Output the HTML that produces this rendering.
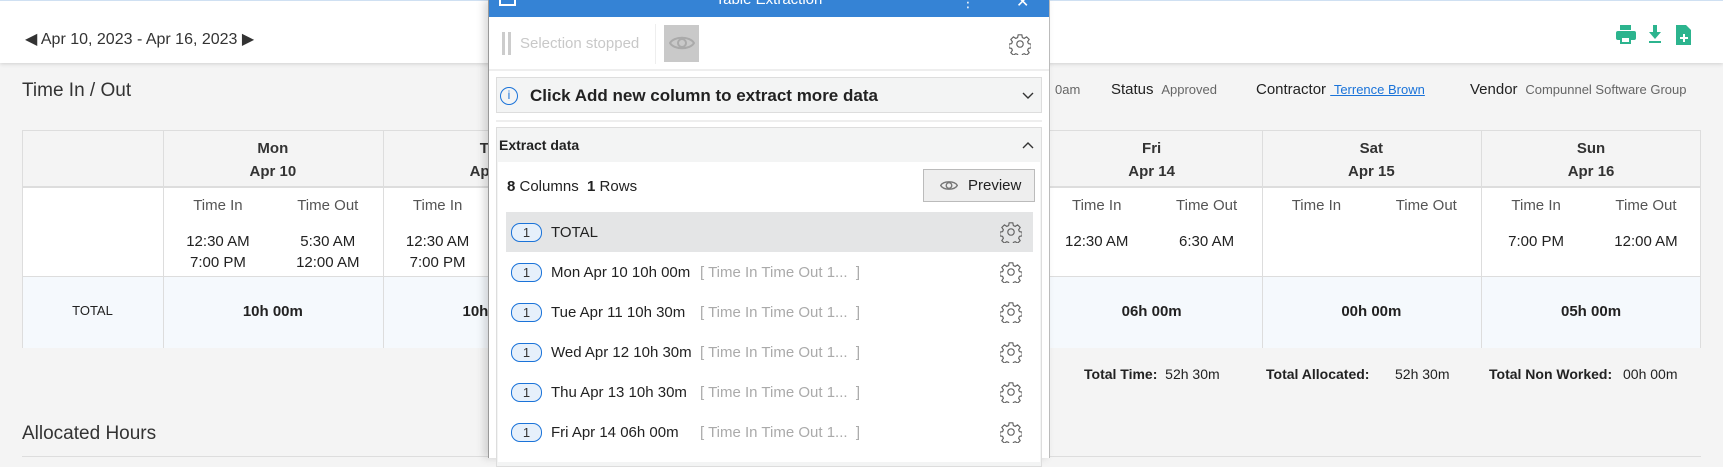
<!DOCTYPE html>
<html><head><meta charset="utf-8"><style>
*{box-sizing:border-box;margin:0;padding:0}
body{width:1723px;height:458px;overflow:hidden;background:#f4f4f4;font-family:"Liberation Sans",Arial,sans-serif;color:#333;position:relative}
.a{position:absolute;white-space:nowrap}
.c{text-align:center}
</style></head><body>
<div class="a" style="left:0;top:0;width:1723px;height:63px;background:#fff;box-shadow:0 1px 4px rgba(0,0,0,.15)"></div>
<div class="a" style="left:0;top:0;width:1723px;height:1px;background:#cfe0f2"></div>
<div class="a" style="left:25px;top:29px;font-size:16px;color:#333">◀ Apr 10, 2023 - Apr 16, 2023 ▶</div>
<svg class="a" style="left:1615px;top:24px" width="80" height="22" viewBox="0 0 80 22">
<g fill="#2cb48e">
<rect x="5" y="1" width="11" height="5"/><rect x="1" y="7" width="20" height="9" rx="2"/><rect x="5" y="12" width="11" height="8"/><rect x="7" y="14" width="7" height="4" fill="#fff"/>
<rect x="38" y="1" width="4" height="8"/><path d="M34 8h12l-6 7z"/><rect x="34" y="17" width="12" height="2"/>
<path d="M61 1h10l5 5v15h-15z"/><path d="M68 10h2v3h3v2h-3v3h-2v-3h-3v-2h3z" fill="#fff"/>
</g></svg>
<div class="a" style="left:22px;top:80px;font-size:19px;color:#333">Time In / Out</div>
<div class="a" style="left:1055px;top:82px;font-size:13px;color:#666">0am</div>
<div class="a" style="left:1111px;top:81px;font-size:15px;color:#222">Status <span style="font-size:13px;color:#666">&nbsp;Approved</span></div>
<div class="a" style="left:1256px;top:81px;font-size:15px;color:#222">Contractor <span style="font-size:13px;color:#1a73d9;text-decoration:underline">&nbsp;Terrence Brown</span></div>
<div class="a" style="left:1470px;top:81px;font-size:15px;color:#222">Vendor <span style="font-size:13px;color:#666">&nbsp;Compunnel Software Group</span></div>

<div class="a" style="left:22px;top:130px;width:1679px;height:218px;border:1px solid #ddd;border-bottom:none;background:#fff"></div>
<div class="a" style="left:23px;top:131px;width:1677px;height:57px;background:#f4f4f4;border-bottom:2px solid #ddd"></div>
<div class="a" style="left:23px;top:276px;width:1677px;height:72px;background:#f5f9fd;border-top:1px solid #ddd"></div>
<div class="a c" style="left:22px;top:303px;width:141px;font-size:13px;color:#222">TOTAL</div>
<div id="cols"></div>
<script>
var d=[["Mon","Apr 10",["12:30 AM","7:00 PM"],["5:30 AM","12:00 AM"],"10h 00m"],["Tue","Apr 11",["12:30 AM","7:00 PM"],["",""],"10h 30m"],["Wed","Apr 12",[],[],"10h 30m"],["Thu","Apr 13",[],[],"10h 30m"],["Fri","Apr 14",["12:30 AM"],["6:30 AM"],"06h 00m"],["Sat","Apr 15",[],[],"00h 00m"],["Sun","Apr 16",["7:00 PM"],["12:00 AM"],"05h 00m"]];
var h="";
for(var i=0;i<7;i++){var x=163+i*219.7,w=219.7,e=d[i];
h+='<div class="a" style="left:'+x+'px;top:131px;width:1px;height:217px;background:#ddd"></div>';
h+='<div class="a c" style="left:'+x+'px;top:137px;width:'+w+'px;font-size:15px;font-weight:bold;line-height:23px">'+e[0]+'<br>'+e[1]+'</div>';
h+='<div class="a c" style="left:'+x+'px;top:197px;width:'+w/2+'px;font-size:15px;color:#555">Time In</div>';
h+='<div class="a c" style="left:'+(x+w/2)+'px;top:197px;width:'+w/2+'px;font-size:15px;color:#555">Time Out</div>';
h+='<div class="a c" style="left:'+x+'px;top:231px;width:'+w/2+'px;font-size:15px;line-height:21px;color:#222">'+e[2].join('<br>')+'</div>';
h+='<div class="a c" style="left:'+(x+w/2)+'px;top:231px;width:'+w/2+'px;font-size:15px;line-height:21px;color:#222">'+e[3].join('<br>')+'</div>';
h+='<div class="a c" style="left:'+x+'px;top:303px;width:'+w+'px;font-size:15px;font-weight:bold;color:#222">'+e[4]+'</div>';}
document.getElementById('cols').innerHTML=h;
</script>
<div class="a" style="left:1084px;top:366px;font-size:14px;color:#222"><b>Total Time:</b>&nbsp; 52h 30m</div>
<div class="a" style="left:1266px;top:366px;font-size:14px;color:#222"><b>Total Allocated:</b></div>
<div class="a" style="left:1395px;top:366px;font-size:14px;color:#222">52h 30m</div>
<div class="a" style="left:1489px;top:366px;font-size:14px;color:#222"><b>Total Non Worked:</b></div>
<div class="a" style="left:1623px;top:366px;font-size:14px;color:#222">00h 00m</div>
<div class="a" style="left:22px;top:423px;font-size:19px;color:#333">Allocated Hours</div>
<div class="a" style="left:22px;top:456px;width:1679px;height:1px;background:#ddd"></div>

<div class="a" style="left:488px;top:0;width:562px;height:458px;background:#fff;border-left:1px solid #999;border-right:1px solid #bbb;box-shadow:-4px 0 8px rgba(0,0,0,.15);font-family:'Liberation Sans','DejaVu Sans',sans-serif">
 <div class="a" style="left:0;top:0;width:560px;height:17px;background:#3583d5;overflow:hidden">
  <div class="a" style="left:10px;top:-8px;width:17px;height:14px;border:2px solid #fff"></div>
  <div class="a c" style="left:0;top:-9px;width:560px;color:#fff;font-size:15px">Table Extraction</div>
  <div class="a" style="left:472px;top:-6px;color:#fff;font-size:14px">⋮</div>
  <div class="a" style="left:527px;top:-8px;color:#fff;font-size:16px">✕</div>
 </div>
 <div class="a" style="left:13px;top:32px;width:3px;height:23px;background:#ccc"></div>
 <div class="a" style="left:19px;top:32px;width:3px;height:23px;background:#ccc"></div>
 <div class="a" style="left:31px;top:35px;font-size:15px;color:#c8c8c8">Selection stopped</div>
 <div class="a" style="left:166px;top:24px;width:1px;height:40px;background:#eee"></div>
 <div class="a" style="left:175px;top:25px;width:35px;height:37px;background:#c9c9c9"></div>
 <svg class="a" style="left:180px;top:34px" width="26" height="18" viewBox="0 0 26 18"><path d="M1 9C5 2 21 2 25 9C21 16 5 16 1 9Z" fill="none" stroke="#aaa" stroke-width="2"/><circle cx="13" cy="9" r="4" fill="none" stroke="#aaa" stroke-width="2"/></svg>
 <svg class="a" style="left:520px;top:33px" width="22" height="22" viewBox="0 0 24 24"><path d="M10 2h4l.6 3 2 .9 2.6-1.7 2.8 2.8-1.7 2.6.9 2 3 .6v4l-3 .6-.9 2 1.7 2.6-2.8 2.8-2.6-1.7-2 .9-.6 3h-4l-.6-3-2-.9-2.6 1.7-2.8-2.8 1.7-2.6-.9-2-3-.6v-4l3-.6.9-2-1.7-2.6 2.8-2.8 2.6 1.7 2-.9z" fill="none" stroke="#666" stroke-width="1.3"/><circle cx="12" cy="12" r="3.5" fill="none" stroke="#666" stroke-width="1.3"/></svg>
 <div class="a" style="left:0;top:69px;width:560px;height:2px;background:#eee"></div>
 <div class="a" style="left:7px;top:77px;width:546px;height:36px;background:#f3f4f4;border:1px solid #ddd"></div>
 <div class="a" style="left:11px;top:87px;width:18px;height:18px;border:1.5px solid #1a73d9;border-radius:50%;color:#1a73d9;font-size:12px;text-align:center;line-height:15px">i</div>
 <div class="a" style="left:41px;top:86px;font-size:17px;font-weight:bold;color:#222">Click Add new column to extract more data</div>
 <svg class="a" style="left:533px;top:92px" width="12" height="8" viewBox="0 0 12 8"><path d="M1 1l5 5 5-5" fill="none" stroke="#333" stroke-width="1.4"/></svg>
 <div class="a" style="left:7px;top:120px;width:546px;height:2px;background:#eee"></div>
 <div class="a" style="left:7px;top:127px;width:546px;height:340px;background:#f3f4f4;border:1px solid #ddd"></div>
 <div class="a" style="left:10px;top:137px;font-size:14px;font-weight:bold;color:#222">Extract data</div>
 <svg class="a" style="left:533px;top:141px" width="12" height="8" viewBox="0 0 12 8"><path d="M1 7l5-5 5 5" fill="none" stroke="#333" stroke-width="1.4"/></svg>
 <div class="a" style="left:9px;top:162px;width:542px;height:300px;background:#fff"></div>
 <div class="a" style="left:18px;top:178px;font-size:15px;color:#222"><b>8</b> Columns &nbsp;<b>1</b> Rows</div>
 <div class="a" style="left:434px;top:169px;width:112px;height:33px;background:#eee;border:1px solid #bbb"></div>
 <svg class="a" style="left:451px;top:179px" width="18" height="13" viewBox="0 0 26 18"><path d="M1 9C5 2 21 2 25 9C21 16 5 16 1 9Z" fill="none" stroke="#777" stroke-width="2"/><circle cx="13" cy="9" r="4" fill="none" stroke="#777" stroke-width="2"/></svg>
 <div class="a" style="left:479px;top:177px;font-size:15px;color:#222">Preview</div>
 <div class="a" style="left:17px;top:212px;width:527px;height:40px;background:#e4e5e6"></div>
 <div id="rows"></div>
</div>
<script>
var r=[["TOTAL",""],["Mon Apr 10 10h 00m","[ Time In Time Out 1...&nbsp; ]"],["Tue Apr 11 10h 30m","[ Time In Time Out 1...&nbsp; ]"],["Wed Apr 12 10h 30m","[ Time In Time Out 1...&nbsp; ]"],["Thu Apr 13 10h 30m","[ Time In Time Out 1...&nbsp; ]"],["Fri Apr 14 06h 00m","[ Time In Time Out 1...&nbsp; ]"]];
var g='<svg width="22" height="22" viewBox="0 0 24 24"><path d="M10 2h4l.6 3 2 .9 2.6-1.7 2.8 2.8-1.7 2.6.9 2 3 .6v4l-3 .6-.9 2 1.7 2.6-2.8 2.8-2.6-1.7-2 .9-.6 3h-4l-.6-3-2-.9-2.6 1.7-2.8-2.8 1.7-2.6-.9-2-3-.6v-4l3-.6.9-2-1.7-2.6 2.8-2.8 2.6 1.7 2-.9z" fill="none" stroke="#666" stroke-width="1.3"/><circle cx="12" cy="12" r="3.5" fill="none" stroke="#666" stroke-width="1.3"/></svg>';
var s="";
for(var i=0;i<r.length;i++){var y=232+i*40;
s+='<div class="a" style="left:22px;top:'+(y-9)+'px;width:31px;height:19px;border:1.5px solid #1a73d9;border-radius:9px;background:#e6f0fb;text-align:center;font-size:13px;line-height:17px;color:#333">1</div>';
s+='<div class="a" style="left:62px;top:'+(y-8)+'px;font-size:15px;color:#222">'+r[i][0]+'</div>';
s+='<div class="a" style="left:211px;top:'+(y-8)+'px;font-size:15px;color:#aaa">'+r[i][1]+'</div>';
s+='<div class="a" style="left:511px;top:'+(y-11)+'px">'+g+'</div>';}
document.getElementById('rows').innerHTML=s;
</script>
</body></html>
